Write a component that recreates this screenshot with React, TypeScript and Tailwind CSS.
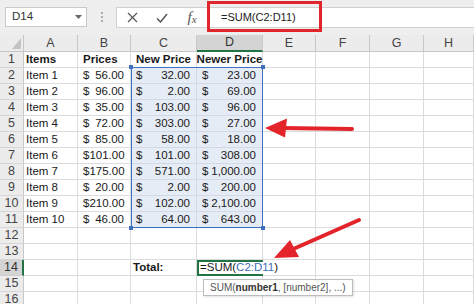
import { Fragment } from 'react'

const COLS = ['A', 'B', 'C', 'D', 'E', 'F', 'G', 'H']

const ITEMS: [string, number, number, number][] = [
  ['Item 1', 56, 32, 23],
  ['Item 2', 96, 2, 69],
  ['Item 3', 35, 103, 96],
  ['Item 4', 72, 303, 27],
  ['Item 5', 85, 58, 18],
  ['Item 6', 101, 101, 308],
  ['Item 7', 175, 571, 1000],
  ['Item 8', 20, 2, 200],
  ['Item 9', 210, 102, 2100],
  ['Item 10', 46, 64, 643],
]

const fmt = (v: number) =>
  v.toLocaleString('en-US', { minimumFractionDigits: 2, maximumFractionDigits: 2 })

function Money({ value, selected }: { value: number; selected?: boolean }) {
  return (
    <div
      className={
        selected
          ? 'flex items-center justify-between border-r border-b border-[#d3d9e2] bg-[#e6ecf5] pl-[5px] pr-[6px]'
          : 'flex items-center justify-between border-r border-b border-[#dcdcdc] pl-[5px] pr-[6px]'
      }
    >
      <span>$</span>
      <span>{fmt(value)}</span>
    </div>
  )
}

function Blank() {
  return <div className="border-r border-b border-[#dcdcdc]" />
}

function RowHead({ n, active }: { n: number; active?: boolean }) {
  return (
    <div
      className={
        active
          ? 'flex items-center justify-center border-r-2 border-b border-r-[#217346] border-b-[#cfcfcf] bg-[#d4d4d4] text-[12.5px] text-[#333]'
          : 'flex items-center justify-center border-r border-b border-r-[#c8c8c8] border-b-[#d6d6d6] bg-[#ececec] text-[12.5px] text-[#444]'
      }
    >
      {n}
    </div>
  )
}

export default function App() {
  return (
    <div className="relative h-[304px] w-[474px] overflow-hidden bg-white font-['Liberation_Sans',Arial,sans-serif] text-[11.5px] leading-none text-[#1a1a1a]">
      {/* Formula bar */}
      <div className="flex h-[35px] items-start bg-[#eeeeee] pt-[7px]">
        <div className="ml-[5px] flex h-[20px] w-[82px] items-center justify-between border border-[#c9c9c9] bg-white pl-[6px] pr-[4px] text-[11.5px] text-[#333]">
          <span>D14</span>
          <svg width="7" height="4" viewBox="0 0 7 4">
            <path d="M0 0h7L3.5 4z" fill="#666" />
          </svg>
        </div>
        <div className="flex w-[29px] flex-col items-center gap-[2px] pt-[5px]">
          <span className="h-[2px] w-[2px] bg-[#aaa]" />
          <span className="h-[2px] w-[2px] bg-[#aaa]" />
          <span className="h-[2px] w-[2px] bg-[#aaa]" />
        </div>
        <div className="flex h-[21px] flex-1 items-center border-y border-l border-[#d0d0d0] bg-white">
          <div className="flex w-[30px] justify-center">
            <svg width="11" height="11" viewBox="0 0 11 11">
              <path d="M1 1l9 9M10 1l-9 9" stroke="#555" strokeWidth="1.2" />
            </svg>
          </div>
          <div className="flex w-[30px] justify-center">
            <svg width="12" height="10" viewBox="0 0 12 10">
              <path d="M1 5.5l3.5 3.5L11 1" stroke="#555" strokeWidth="1.5" fill="none" />
            </svg>
          </div>
          <div className="flex w-[30px] items-end justify-center font-['Liberation_Serif',serif] text-[15px] italic text-[#555]">
            f<span className="text-[11px]">x</span>
          </div>
          <div className="pl-[14px] text-[11px] text-[#222]">=SUM(C2:D11)</div>
        </div>
      </div>

      {/* Sheet grid */}
      <div className="grid grid-cols-[24px_54px_53px_66px_66px_53px_54px_54px_1fr] grid-rows-[17px_repeat(16,16px)]">
        <div className="relative border-r border-b border-[#c8c8c8] bg-[#ececec]">
          <svg className="absolute right-[2px] bottom-[2px]" width="9" height="11" viewBox="0 0 9 11">
            <path d="M9 0v11H0z" fill="#c4c4c4" />
          </svg>
        </div>
        {COLS.map((c) =>
          c === 'D' ? (
            <div
              key={c}
              className="flex items-center justify-center border-r border-b-2 border-r-[#c8c8c8] border-b-[#217346] bg-[#d4d4d4] text-[12.5px] text-[#333]"
            >
              {c}
            </div>
          ) : (
            <div
              key={c}
              className="flex items-center justify-center border-r border-b border-[#c8c8c8] bg-[#ececec] text-[12.5px] text-[#444]"
            >
              {c}
            </div>
          ),
        )}

        {/* Row 1 */}
        <RowHead n={1} />
        <div className="flex items-center border-r border-b border-[#dcdcdc] pl-[2px] font-bold">Items</div>
        <div className="flex items-center border-r border-b border-[#dcdcdc] pl-[5px] font-bold">Prices</div>
        <div className="flex items-center justify-center border-r border-b border-[#dcdcdc] font-bold">New Price</div>
        <div className="flex items-center justify-center border-r border-b border-[#dcdcdc] font-bold whitespace-nowrap">
          Newer Price
        </div>
        <Blank />
        <Blank />
        <Blank />
        <Blank />

        {/* Rows 2-11 */}
        {ITEMS.map(([name, p, np, nr], i) => (
          <Fragment key={name}>
            <RowHead n={i + 2} />
            <div className="flex items-center border-r border-b border-[#dcdcdc] pl-[2px]">{name}</div>
            <Money value={p} />
            <Money value={np} selected />
            <Money value={nr} selected />
            <Blank />
            <Blank />
            <Blank />
            <Blank />
          </Fragment>
        ))}

        {/* Rows 12-16 */}
        {[12, 13, 14, 15, 16].map((n) => (
          <Fragment key={n}>
            <RowHead n={n} active={n === 14} />
            <Blank />
            <Blank />
            {n === 14 ? (
              <>
                <div className="flex items-center border-r border-b border-[#dcdcdc] pl-[2px] font-bold">Total:</div>
                <div className="relative z-10 flex items-center border-y-2 border-l-2 border-[#217346] pl-[1px] whitespace-nowrap">
                  <span>=SUM(</span>
                  <span className="text-[#3b6cb7]">C2:D11</span>
                  <span>)</span>
                </div>
              </>
            ) : (
              <>
                <Blank />
                <Blank />
              </>
            )}
            <Blank />
            <Blank />
            <Blank />
            <Blank />
          </Fragment>
        ))}
      </div>

      {/* Range highlight C2:D11 */}
      <div className="pointer-events-none absolute top-[67px] left-[131px] h-[161px] w-[132px] border-[1.5px] border-[#3f6fbf]">
        <span className="absolute -top-[3px] -left-[3px] h-[4px] w-[4px] bg-[#3f6fbf]" />
        <span className="absolute -top-[3px] -right-[3px] h-[4px] w-[4px] bg-[#3f6fbf]" />
        <span className="absolute -bottom-[3px] -left-[3px] h-[4px] w-[4px] bg-[#3f6fbf]" />
        <span className="absolute -right-[3px] -bottom-[3px] h-[4px] w-[4px] bg-[#3f6fbf]" />
      </div>

      {/* Function tooltip */}
      <div className="absolute top-[279px] left-[203px] flex h-[17px] items-center border border-[#bdbdbd] bg-white px-[6px] text-[10px] whitespace-nowrap text-[#555] shadow-[1px_1px_2px_rgba(0,0,0,0.12)]">
        SUM(<span className="font-bold text-[#333]">number1</span>, [number2], ...)
      </div>

      {/* Red callout box */}
      <div className="pointer-events-none absolute top-[1px] left-[207px] h-[31px] w-[115px] border-[3px] border-[#e0252b]" />

      {/* Red arrows */}
      <svg className="pointer-events-none absolute inset-0" width="474" height="304" viewBox="0 0 474 304">
        <line x1="352" y1="129" x2="282" y2="128" stroke="#e3242b" strokeWidth="4" strokeLinecap="round" />
        <polygon points="265,128 287,118.5 285,137.5" fill="#e3242b" />
        <line x1="359" y1="220" x2="291" y2="250" stroke="#e3242b" strokeWidth="4" strokeLinecap="round" />
        <polygon points="274,258 290,240 299,257" fill="#e3242b" />
      </svg>
    </div>
  )
}
